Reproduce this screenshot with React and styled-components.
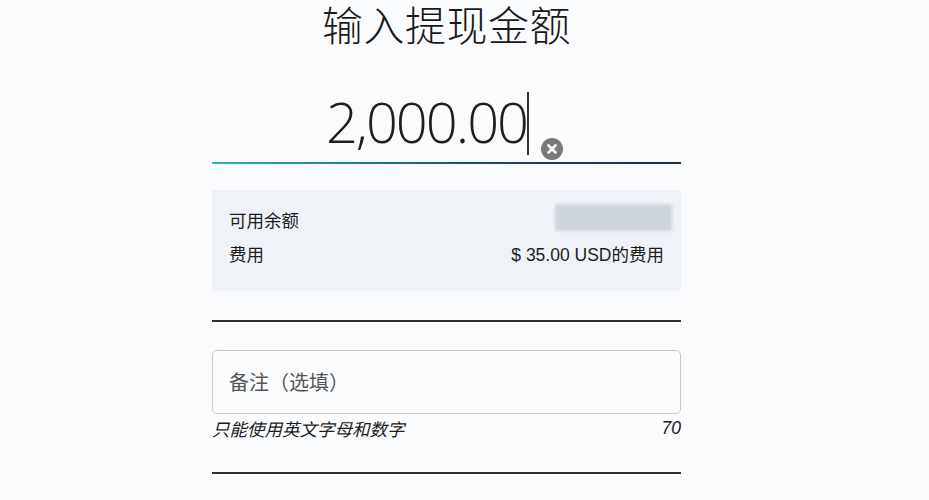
import React from 'react';
import styled, { createGlobalStyle } from 'styled-components';

const GlobalStyle = createGlobalStyle`
  html, body {
    margin: 0;
    padding: 0;
    background: #f9fbfd;
  }
  body {
    font-family: "Liberation Sans", "Noto Sans CJK SC", sans-serif;
    color: #1c1c1c;
  }
`;

// withdrawal amount form
export default function App() {
  return (
    <>
      <GlobalStyle />
      <Page>
        <Column>
          <Title>输入提现金额</Title>
          <AmountRow>
            <AmountText>2,000.00</AmountText>
            <Caret />
            <ClearBtn aria-label="clear">
              <svg width="22" height="22" viewBox="0 0 22 22">
                <circle cx="11" cy="11" r="11" fill="#7a7a7a" />
                <path d="M7.5 7.5 L14.5 14.5 M14.5 7.5 L7.5 14.5" stroke="#fff" strokeWidth="2.6" strokeLinecap="round" />
              </svg>
            </ClearBtn>
          </AmountRow>
          <GradientLine />

          <InfoBox>
            <InfoRow>
              <Label>可用余额</Label>
              <Blurred />
            </InfoRow>
            <InfoRow>
              <Label>费用</Label>
              <Value>$ 35.00 USD的费用</Value>
            </InfoRow>
          </InfoBox>

          <Divider $top={29} />

          <NoteBox>
            <Placeholder>备注（选填）</Placeholder>
          </NoteBox>
          <HintRow>
            <Hint>只能使用英文字母和数字</Hint>
            <Hint>70</Hint>
          </HintRow>

          <Divider $top={33} />
        </Column>
      </Page>
    </>
  );
}

const Page = styled.div`
  width: 929px;
  height: 500px;
  overflow: hidden;
`;

const Column = styled.div`
  margin-left: 212px;
  width: 469px;
  display: flex;
  flex-direction: column;
`;

const Title = styled.h1`
  margin: 0;
  text-align: center;
  font-family: "Noto Sans CJK SC", sans-serif;
  font-weight: 300;
  font-size: 41px;
  line-height: 46px;
  letter-spacing: 0.5px;
  color: #1a1a1a;
`;

const AmountRow = styled.div`
  margin-top: 42px;
  height: 74px;
  display: flex;
  justify-content: center;
  align-items: flex-start;
  padding-right: 4px;
`;

const AmountText = styled.span`
  font-family: "Open Sans", sans-serif;
  font-weight: 300;
  font-size: 56px;
  line-height: 66px;
  color: #1e1e1e;
  letter-spacing: -2px;
`;

const Caret = styled.span`
  width: 2px;
  height: 63px;
  margin: 4px 0 0 0;
  background: #333;
`;

const ClearBtn = styled.span`
  display: flex;
  margin: 50px 0 0 12px;
`;

const GradientLine = styled.div`
  height: 2px;
  background: linear-gradient(90deg, #2bb4c8 0%, #1f6f9c 35%, #1c3d78 65%, #1b2a5e 100%);
`;

const InfoBox = styled.div`
  margin-top: 26px;
  height: 101px;
  background: #eff3f8;
  padding: 16px 9px 0 17px;
  box-sizing: border-box;
  display: flex;
  flex-direction: column;
  gap: 7px;
`;

const InfoRow = styled.div`
  display: flex;
  justify-content: space-between;
  align-items: center;
  height: 27px;
`;

const Label = styled.span`
  font-family: "Noto Sans CJK SC", sans-serif;
  font-size: 17.5px;
  color: #1c1c1c;
`;

const Value = styled.span`
  font-family: "Liberation Sans", "Noto Sans CJK SC", sans-serif;
  font-size: 17.5px;
  color: #1c1c1c;
  margin-right: 8px;
`;

const Blurred = styled.span`
  width: 117px;
  height: 27px;
  margin-top: -4px;
  background: #cfd5dc;
  filter: blur(1.5px);
`;

const Divider = styled.div`
  margin-top: ${p => p.$top}px;
  height: 2px;
  background: #2e2e2e;
`;

const NoteBox = styled.div`
  margin-top: 28px;
  height: 64px;
  border: 1px solid #c6c9cc;
  border-radius: 5px;
  background: #fbfcfd;
  box-sizing: border-box;
  display: flex;
  align-items: center;
  padding: 0 0 2px 16px;
`;

const Placeholder = styled.span`
  font-family: "Noto Sans CJK SC", sans-serif;
  font-size: 20px;
  color: #555;
`;

const HintRow = styled.div`
  display: flex;
  justify-content: space-between;
  margin-top: 3px;
  height: 22px;
  align-items: center;
`;

const Hint = styled.span`
  font-family: "Liberation Sans", "Noto Sans CJK SC", sans-serif;
  font-style: italic;
  font-size: 17.5px;
  color: #1c1c1c;
`;
